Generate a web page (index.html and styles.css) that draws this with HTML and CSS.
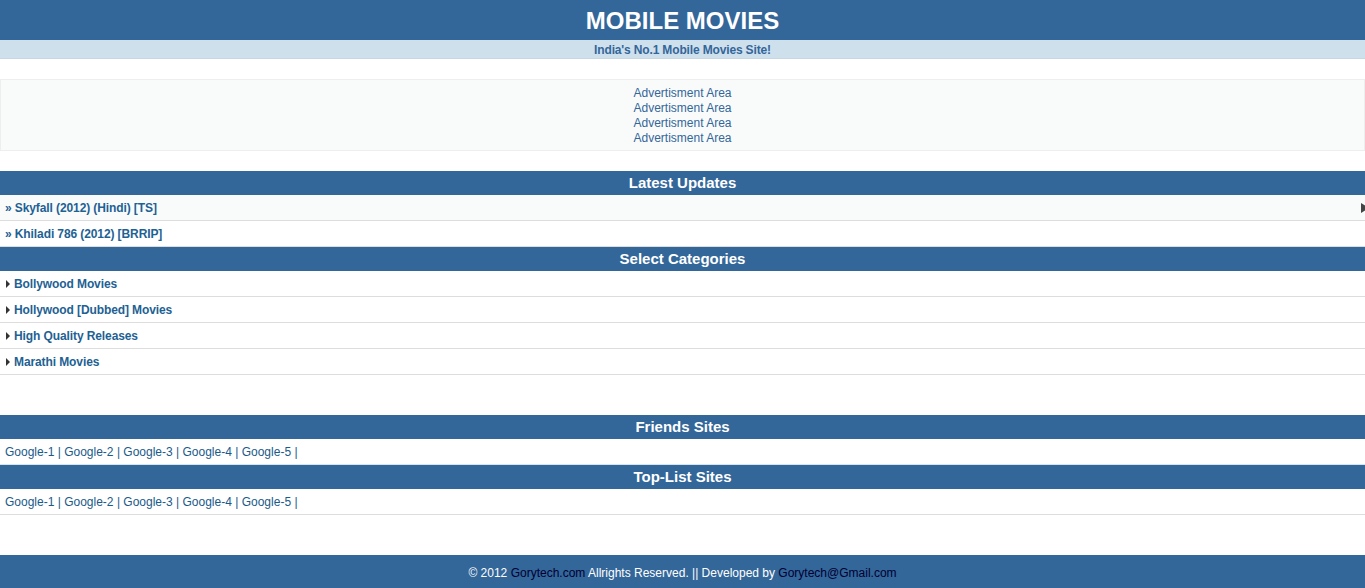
FILE: index.html
```html
<!DOCTYPE html>
<html lang="en">

<head>
    <meta charset="UTF-8">
    <title>Mobile Movies</title>
    <link rel="stylesheet" href="styles.css">
</head>

<body>
    <div class="logo">MOBILE MOVIES</div>
    <div class="tagline">India's No.1 Mobile Movies Site!</div>

    <div class="ad">
        <a href="#">Advertisment Area</a><br>
        <a href="#">Advertisment Area</a><br>
        <a href="#">Advertisment Area</a><br>
        <a href="#">Advertisment Area</a>
    </div>

    <div class="heading">Latest Updates</div>
    <div class="update odd">
        <a href="#">&raquo; Skyfall (2012) (Hindi) [TS]</a>
        <span class="edge-arrow"></span>
    </div>
    <div class="update">
        <a href="#">&raquo; Khiladi 786 (2012) [BRRIP]</a>
    </div>

    <div class="heading">Select Categories</div>
    <div class="cat"><a href="#">Bollywood Movies</a></div>
    <div class="cat"><a href="#">Hollywood [Dubbed] Movies</a></div>
    <div class="cat"><a href="#">High Quality Releases</a></div>
    <div class="cat"><a href="#">Marathi Movies</a></div>

    <div class="heading spaced">Friends Sites</div>
    <div class="links blue-line">
        <a href="#">Google-1</a> | <a href="#">Google-2</a> | <a href="#">Google-3</a> | <a href="#">Google-4</a> | <a href="#">Google-5</a> |
    </div>

    <div class="heading">Top-List Sites</div>
    <div class="links">
        <a href="#">Google-1</a> | <a href="#">Google-2</a> | <a href="#">Google-3</a> | <a href="#">Google-4</a> | <a href="#">Google-5</a> |
    </div>

    <div class="footer">
        &copy; 2012 <a href="#">Gorytech.com</a> Allrights Reserved. || Developed by <a href="#">Gorytech@Gmail.com</a>
    </div>
</body>

</html>
```

FILE: styles.css
```css
body {
    margin: 0;
    font-family: "Liberation Sans", Arial, sans-serif;
    font-size: 12px;
    background: #fff;
    color: #1e6193;
}

a {
    color: #1e6193;
    text-decoration: none;
}

.logo {
    background: #336699;
    color: #fff;
    font-size: 24px;
    font-weight: bold;
    text-align: center;
    height: 40px;
    line-height: 41px;
}

.tagline {
    background: #cfe0ed;
    color: #336699;
    font-weight: bold;
    letter-spacing: -0.15px;
    text-align: center;
    height: 18px;
    line-height: 20px;
    border-bottom: 1px solid #c6d6e2;
}

.ad {
    margin-top: 20px;
    background: #f9fbfb;
    border: 1px solid #eeeeee;
    padding: 6px 0 4px;
    text-align: center;
    line-height: 15px;
}

.ad a {
    color: #336699;
}

.heading {
    background: #336699;
    color: #fff;
    font-size: 15px;
    font-weight: bold;
    text-align: center;
    height: 24px;
    line-height: 23px;
}

.ad + .heading {
    margin-top: 20px;
}

.heading.spaced {
    margin-top: 40px;
}

.update,
.cat,
.links {
    height: 24px;
    padding-top: 1px;
    line-height: 25px;
    padding-left: 5px;
    border-bottom: 1px solid #dddddd;
    position: relative;
}

.update a,
.cat a {
    font-weight: bold;
    letter-spacing: -0.1px;
}

.update.odd {
    background: #f9fbfb;
}

.edge-arrow {
    position: absolute;
    right: -4px;
    top: 8px;
    width: 0;
    height: 0;
    border-top: 5px solid transparent;
    border-bottom: 5px solid transparent;
    border-left: 8px solid #444;
}

.cat {
    padding-left: 14px;
}

.cat::before {
    content: "";
    position: absolute;
    left: 6px;
    top: 9px;
    border-top: 4px solid transparent;
    border-bottom: 4px solid transparent;
    border-left: 4px solid #333;
}

.links {
    color: #1a5a8a;
}

.links a {
    color: #1a5a8a;
}

.links.blue-line {
    border-bottom-color: #d6e4ef;
}

.footer {
    margin-top: 40px;
    background: #336699;
    color: #fff;
    text-align: center;
    height: 36px;
    line-height: 36px;
}

.footer a {
    color: #000033;
}
```
